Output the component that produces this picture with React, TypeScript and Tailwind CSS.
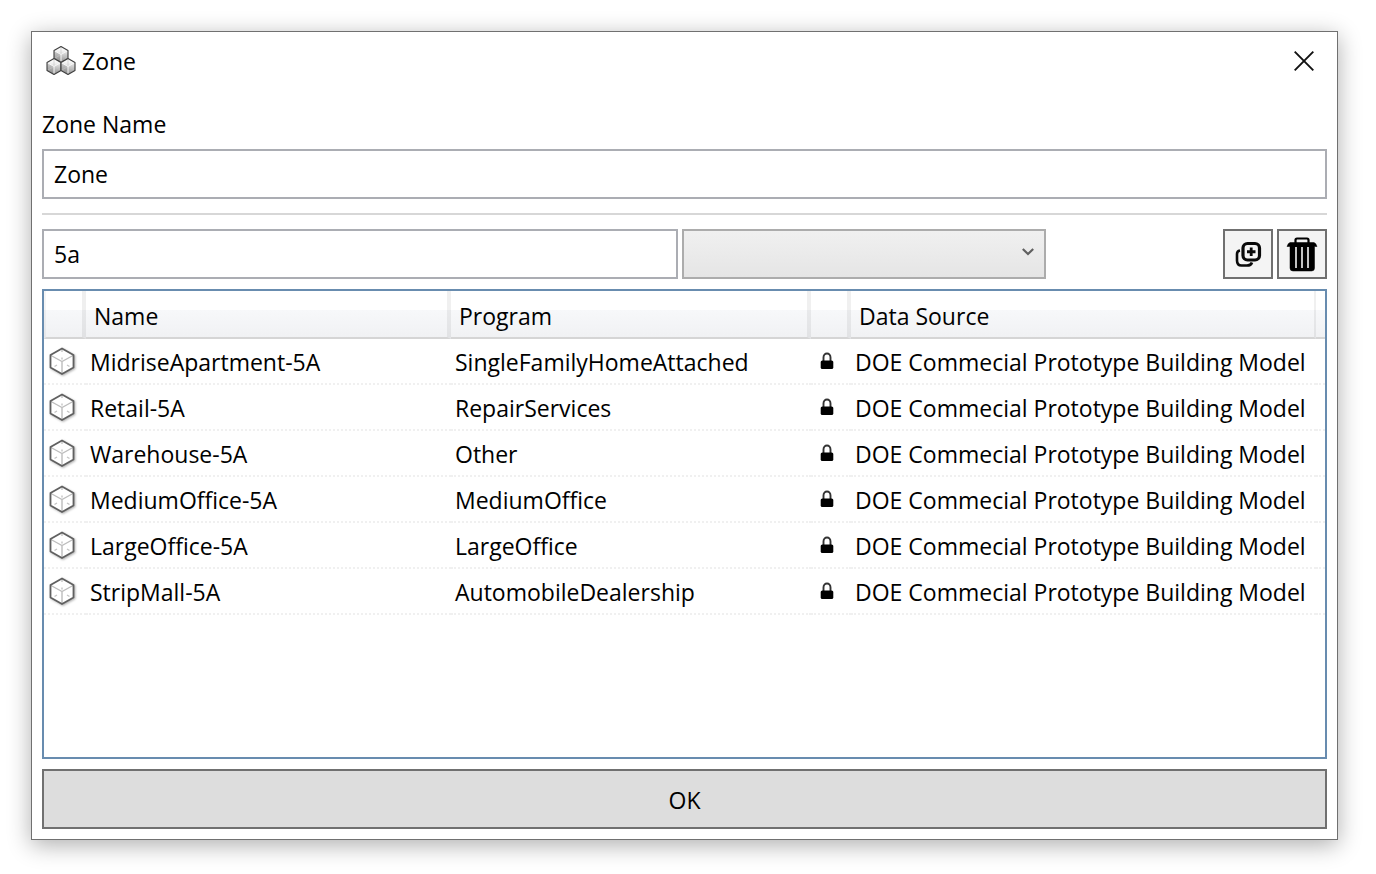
const HEX = "M0 -8L7 -4V4L0 8L-7 4V-4Z";

function CubeFaces() {
  return (
    <>
      <path d={HEX} fill="url(#cube-shade)" />
      <path d="M-7 -4L0 0V8L-7 4Z" fill="#6b6b6b" fillOpacity="0.22" />
      <path d="M0 -8L-7 -4L0 0L7 -4Z" fill="#fff" fillOpacity="0.35" />
      <path d="M-7 4L0 0L7 4M0 0V-8" fill="none" stroke="#c4c4c4" strokeWidth="0.6" />
      <path d="M-7 -4L0 0L7 -4M0 0V8" fill="none" stroke="#f6f6f6" strokeWidth="1" />
      <path d={HEX} fill="none" stroke="#3f3f3f" strokeWidth="1.1" strokeLinejoin="round" />
    </>
  );
}

function ZoneLogo() {
  return (
    <svg className="size-8 shrink-0" viewBox="0 0 32 32" aria-hidden="true">
      <defs>
        <linearGradient id="cube-shade" x1="0" y1="0" x2="0" y2="1">
          <stop offset="0.2" stopColor="#f4f4f4" />
          <stop offset="1" stopColor="#909090" />
        </linearGradient>
      </defs>
      <g transform="translate(16 9.5)">
        <CubeFaces />
      </g>
      <g transform="translate(9 21.5)">
        <CubeFaces />
      </g>
      <g transform="translate(23 21.5)">
        <CubeFaces />
      </g>
    </svg>
  );
}

function CubeIcon() {
  return (
    <svg className="block size-8 drop-shadow-[1px_1px_1px_rgba(0,0,0,0.3)]" viewBox="0 0 32 32" aria-hidden="true">
      <path d="M16 3.500L27.500 10V22.500L16 29L4.500 22.500V10Z" fill="#fff" />
      <path d="M5 10.500L16 16.500L27 10.500M16 16.500V28" fill="none" stroke="#bdbdbd" strokeWidth="1.4" />
      <path
        d="M16 12.500V14.500M16 5V7M8.500 21.500L11 20M21 20L23.500 21.500"
        fill="none"
        stroke="#c4c4c4"
        strokeWidth="1.4"
      />
      <path
        d="M16 3.500L27.500 10V22.500L16 29L4.500 22.500V10Z"
        fill="none"
        stroke="#606060"
        strokeWidth="1.8"
        strokeLinejoin="round"
      />
    </svg>
  );
}

function LockIcon() {
  return (
    <svg className="mx-auto block size-5" viewBox="0 0 20 20" role="img" aria-label="Locked">
      <path d="M6.500 10.500V6.500A3.500 4 0 0 1 13.500 6.500V10.500" fill="none" stroke="#333" strokeWidth="1.9" />
      <rect x="3.700" y="9.500" width="12.600" height="8.600" rx="1.6" fill="#000" />
    </svg>
  );
}

function DuplicateIcon() {
  return (
    <svg className="block size-full" viewBox="0 0 46 46" fill="none" stroke="#0a0a0a" aria-hidden="true">
      <rect x="18" y="12.500" width="16.500" height="16.500" rx="4.500" strokeWidth="3.2" />
      <path d="M26.200 16.500V25M22 20.750H30.500" strokeWidth="2.8" />
      <path d="M15 19.500Q12 20 12 23V29.500Q12 34.500 16.500 34.500H22Q26 34.500 27 31.500" strokeWidth="2.6" />
    </svg>
  );
}

function TrashIcon() {
  return (
    <svg className="block size-full" viewBox="0 0 46 46" aria-hidden="true">
      <path d="M16.500 12V9Q16.500 7.500 18 7.500H28Q29.500 7.500 29.500 9V12" fill="none" stroke="#000" strokeWidth="2.2" />
      <path
        d="M11 11.500H35Q37 12 38 15.500H35.500V37Q35.500 40 32.500 40H14Q11 40 11 37V15.500H8Q9 12 11 11.500Z"
        fill="#000"
        stroke="#000"
        strokeWidth="0.5"
        strokeLinejoin="round"
      />
      <path d="M17 16V37M23 16V37M29 16V37" fill="none" stroke="#e4e4e4" strokeWidth="1.7" />
    </svg>
  );
}

const SOURCE = "DOE Commecial Prototype Building Model";

const rows = [
  { name: "MidriseApartment-5A", program: "SingleFamilyHomeAttached" },
  { name: "Retail-5A", program: "RepairServices" },
  { name: "Warehouse-5A", program: "Other" },
  { name: "MediumOffice-5A", program: "MediumOffice" },
  { name: "LargeOffice-5A", program: "LargeOffice" },
  { name: "StripMall-5A", program: "AutomobileDealership" },
];

const headCell =
  "border-r-4 border-b-2 border-r-black/6 border-b-[#d5d5d5] p-0 pt-1 pl-2 text-left font-normal";

export default function App() {
  return (
    <main className="flex min-h-screen bg-white pt-[31px] pr-[38px] pb-[34px] pl-[31px] font-['Open_Sans','Noto_Sans',sans-serif] text-[23px] leading-8 text-black">
      <section
        role="dialog"
        aria-labelledby="dialog-title"
        className="flex min-w-0 flex-1 flex-col border border-[#707070] bg-white px-2.5 pb-2.5 shadow-[0_5px_22px_rgba(0,0,0,0.32)]"
      >
        <header className="flex h-[58px] items-center pl-[3px]">
          <ZoneLogo />
          <h1 id="dialog-title" className="flex-1 pl-[5px]">
            Zone
          </h1>
          <button type="button" aria-label="Close" className="mr-[9px] flex size-7 items-center justify-center">
            <svg className="size-5" viewBox="0 0 20 20" aria-hidden="true">
              <path d="M0.700 0.700L19.300 19.300M19.300 0.700L0.700 19.300" stroke="#111" strokeWidth="1.9" />
            </svg>
          </button>
        </header>

        <label htmlFor="zone-name" className="flex h-[59px] items-center pt-2">
          Zone Name
        </label>
        <input
          id="zone-name"
          type="text"
          defaultValue="Zone"
          className="h-[50px] w-full shrink-0 rounded-none border-2 border-[#abadb3] bg-white px-2.5 outline-none"
        />
        <hr className="my-3.5 border-0 border-t-2 border-[#d7d7d7]" />

        <div className="grid grid-cols-[minmax(0,636fr)_minmax(0,364fr)_minmax(104px,277fr)] items-center gap-1">
          <input
            type="text"
            aria-label="Filter"
            defaultValue="5a"
            className="h-[50px] w-full rounded-none border-2 border-[#abadb3] bg-white px-2.5 outline-none"
          />
          <div className="relative">
            <select
              aria-label="Program type"
              className="block h-[50px] w-full appearance-none rounded-none border-2 border-[#acacac] bg-linear-to-b from-[#f0f0f0] to-[#e5e5e5] px-2.5 outline-none"
            >
              <option value=""></option>
            </select>
            <svg
              className="pointer-events-none absolute top-[17px] right-3 h-3 w-3"
              viewBox="0 0 12 12"
              fill="none"
              aria-hidden="true"
            >
              <path d="M0.800 3L6 8L11.200 3" stroke="#606060" strokeWidth="2.2" />
            </svg>
          </div>
          <div className="flex justify-end gap-1">
            <button type="button" aria-label="Duplicate" className="size-[50px] border-2 border-[#707070] bg-[#f4f4f4]">
              <DuplicateIcon />
            </button>
            <button type="button" aria-label="Delete" className="size-[50px] border-2 border-[#707070] bg-[#f4f4f4]">
              <TrashIcon />
            </button>
          </div>
        </div>

        <div className="my-2.5 flex-1 border-2 border-[#688caf]">
          <table className="w-full table-fixed border-separate border-spacing-0">
            <colgroup>
              <col className="w-[42px]" />
              <col className="w-[365px]" />
              <col className="w-[360px]" />
              <col className="w-10" />
              <col />
              <col className="w-[9px]" />
            </colgroup>
            <thead className="bg-[linear-gradient(to_bottom,#fff_0%,#fff_40%,#f7f8fa_40%,#f0f1f3_100%)]">
              <tr className="h-12">
                <th
                  aria-label="Type"
                  className="border-r-4 border-b-2 border-l-2 border-r-black/6 border-b-[#d5d5d5] border-l-black/4 p-0"
                ></th>
                <th className={headCell}>Name</th>
                <th className={headCell}>Program</th>
                <th aria-label="Access" className={headCell}></th>
                <th className="border-r-2 border-b-2 border-r-black/6 border-b-[#d5d5d5] p-0 pt-1 pl-2 text-left font-normal">
                  Data Source
                </th>
                <td className="border-b-2 border-[#d5d5d5] p-0"></td>
              </tr>
            </thead>
            <tbody className="[&_td]:h-[46px] [&_td]:border-b-2 [&_td]:border-dotted [&_td]:border-[#f0f0f0] [&_td]:p-0 [&_td]:whitespace-nowrap">
              {rows.map((row) => (
                <tr key={row.name}>
                  <td>
                    <div className="pl-0.5">
                      <CubeIcon />
                    </div>
                  </td>
                  <td>
                    <div className="truncate pt-0.5 pl-1">{row.name}</div>
                  </td>
                  <td>
                    <div className="truncate pt-0.5 pl-1">{row.program}</div>
                  </td>
                  <td>
                    <div className="pr-2">
                      <LockIcon />
                    </div>
                  </td>
                  <td>
                    <div className="truncate pt-0.5 pl-1">{SOURCE}</div>
                  </td>
                  <td></td>
                </tr>
              ))}
            </tbody>
          </table>
        </div>

        <button type="button" className="h-[60px] w-full shrink-0 border-2 border-[#707070] bg-[#ddd] pt-0.5">
          OK
        </button>
      </section>
    </main>
  );
}
